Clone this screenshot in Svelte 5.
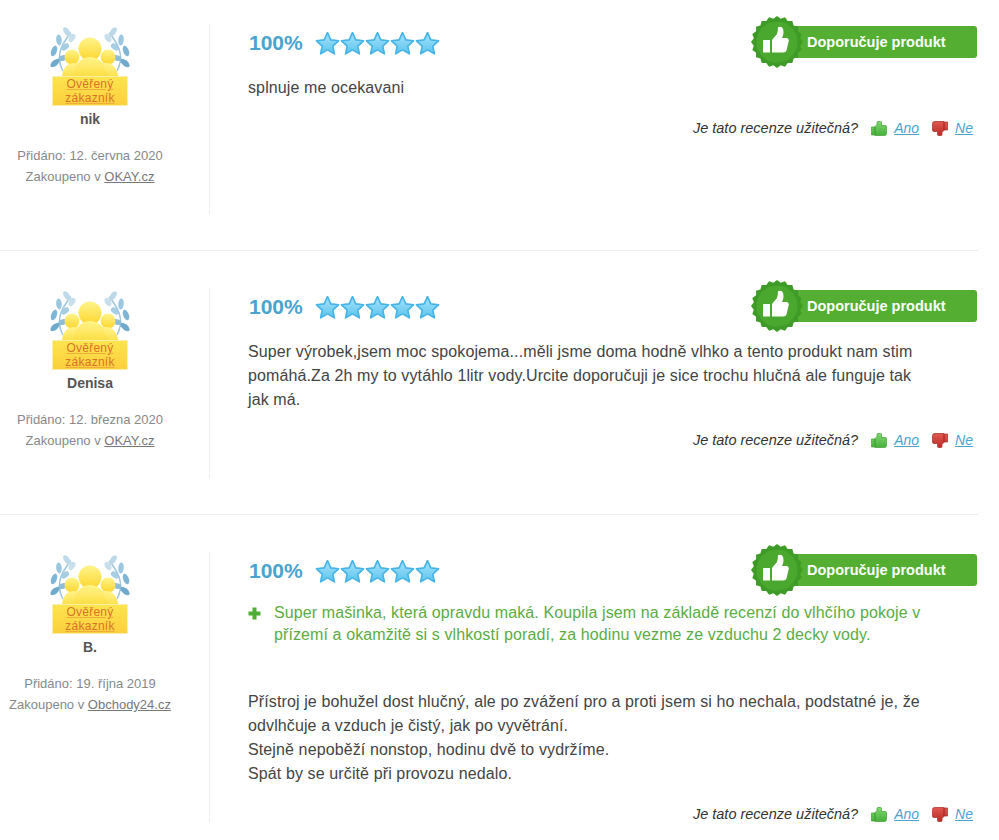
<script>
  const reviews = [
    {
      name: 'nik', date: '12. června 2020', shop: 'OKAY.cz',
      text: ['splnuje me ocekavani'],
    },
    {
      name: 'Denisa', date: '12. března 2020', shop: 'OKAY.cz',
      text: ['Super výrobek,jsem moc spokojema...měli jsme doma hodně vlhko a tento produkt nam stim pomáhá.Za 2h my to vytáhlo 1litr vody.Urcite doporučuji je sice trochu hlučná ale funguje tak jak má.'],
    },
    {
      name: 'B.', date: '19. října 2019', shop: 'Obchody24.cz',
      pro: 'Super mašinka, která opravdu maká. Koupila jsem na základě recenzí do vlhčího pokoje v přízemí a okamžitě si s vlhkostí poradí, za hodinu vezme ze vzduchu 2 decky vody.',
      text: [
        'Přístroj je bohužel dost hlučný, ale po zvážení pro a proti jsem si ho nechala, podstatné je, že odvlhčuje a vzduch je čistý, jak po vyvětrání.',
        'Stejně nepoběží nonstop, hodinu dvě to vydržíme.',
        'Spát by se určitě při provozu nedalo.',
      ],
    },
  ];

  const STAR = 'M12 1.6l3.2 6.9 7.4.9-5.500 5.100 1.500 7.400L12 18.100l-6.600 3.800 1.500-7.400L1.400 9.400l7.400-.9z';

  // laurel leaves: x, y, angle, length, fill
  const LEAVES = [
    [5, 36, 40, 11, '#6fa9cc'],
    [4, 24, 70, 11, '#7fb6d6'],
    [9, 13, 95, 11, '#9cc8df'],
    [17, 5, 125, 11, '#bcd9e8'],
    [13, 31, 15, 9, '#8dbdd8'],
    [15, 20, 35, 9, '#a6cde1'],
    [22, 11, 55, 9, '#c8dfeb'],
  ];

  // burst of 20 shallow teeth behind the thumb
  const burst = Array.from({ length: 40 }, (_, i) => {
    const a = (i * Math.PI) / 20;
    const r = i % 2 ? 23.5 : 26;
    return `${(26 + r * Math.sin(a)).toFixed(1)},${(26 - r * Math.cos(a)).toFixed(1)}`;
  }).join(' ');
</script>

<svg class="defs" width="0" height="0" aria-hidden="true">
  <defs>
    <linearGradient id="star-fill" x1="0" y1="0" x2="0" y2="1">
      <stop offset="0" stop-color="#a8e3fa" />
      <stop offset="1" stop-color="#5cc3ee" />
    </linearGradient>
    <linearGradient id="gold" x1="0" y1="0" x2="0" y2="1">
      <stop offset="0" stop-color="#fff48a" />
      <stop offset="1" stop-color="#fdd62e" />
    </linearGradient>
    <linearGradient id="up-fill" x1="0" y1="0" x2="0" y2="1">
      <stop offset="0" stop-color="#7fd86f" />
      <stop offset="1" stop-color="#46b03a" />
    </linearGradient>
    <linearGradient id="down-fill" x1="0" y1="0" x2="0" y2="1">
      <stop offset="0" stop-color="#e0584f" />
      <stop offset="1" stop-color="#b92c26" />
    </linearGradient>
  </defs>
</svg>

<div class="reviews">
  {#each reviews as r}
    <article class="review">
      <aside class="author">
        <div class="badge">
          <svg class="crest" width="80" height="60" viewBox="0 0 80 60">
            {#each ['', 'translate(80 0) scale(-1 1)'] as side}
              <g transform={side}>
                <path d="M13 44 Q3 26 21 6" fill="none" stroke="#9cc7de" stroke-width="1.500" />
                {#each LEAVES as [x, y, angle, len, fill]}
                  <ellipse cx={x} cy={y} rx={len / 2} ry="2.800" {fill} transform="rotate({-angle} {x} {y})" />
                {/each}
              </g>
            {/each}
            <circle cx="22" cy="30" r="7.500" fill="url(#gold)" />
            <circle cx="58" cy="30" r="7.500" fill="url(#gold)" />
            <path d="M11 56 Q12 36 24 36 H56 Q68 36 69 56z" fill="url(#gold)" />
            <circle cx="40" cy="22" r="11.500" fill="url(#gold)" />
            <path d="M22 56 Q24 30 40 30 Q56 30 58 56z" fill="url(#gold)" />
          </svg>
          <div class="ribbon">Ověřený<br />zákazník</div>
        </div>
        <strong class="name">{r.name}</strong>
        <p class="meta">Přidáno: {r.date}</p>
        <p class="meta">Zakoupeno v <span class="shop">{r.shop}</span></p>
      </aside>

      <div class="body">
        <header class="head">
          <span class="percent">100%</span>
          <span class="stars">
            {#each [0, 1, 2, 3, 4] as s (s)}
              <svg width="25" height="25" viewBox="0 0 24 24">
                <path d={STAR} fill="url(#star-fill)" stroke="#45b4e6" stroke-width="1.600" stroke-linejoin="round" />
              </svg>
            {/each}
          </span>
          <div class="recommend">
            <svg class="seal" width="52" height="52" viewBox="0 0 52 52">
              <polygon points={burst} fill="#3f9b27" />
              <circle cx="26" cy="26" r="20.500" fill="#4aa82f" />
              <path d="M12 24h7v12.500h-7z M21 24 L26 18 Q27 15 27 11 Q32.500 10 32.500 16 Q32.500 19.500 31 22 H36 Q38.500 23 37.500 26 L35.500 34.500 Q35 36.500 32 36.500 H21z" fill="#fff" />
            </svg>
            <span class="recommend-label">Doporučuje produkt</span>
          </div>
        </header>

        {#if r.pro}
          <div class="pro">
            <svg width="13" height="13" viewBox="0 0 13 13"><path d="M4.500 0.500h4v4h4v4h-4v4h-4v-4h-4v-4h4z" fill="#4fae33" /></svg>
            <p>{r.pro}</p>
          </div>
        {/if}

        <div class="text" class:after-pro={r.pro}>
          {#each r.text as line}
            <p>{line}</p>
          {/each}
        </div>

        <footer class="useful">
          <em>Je tato recenze užitečná?</em>
          <span class="vote">
            <svg width="16" height="15" viewBox="0 0 16 15"><path d="M0.500 6h3.500v8h-3.500z M4 5.500 L6 4 V1.500 Q6 0.500 7 0.500 H9.500 Q10.500 0.500 10.500 1.500 V4.500 H14.500 Q15.500 4.500 15.500 6 V12.500 Q15.500 14.500 13.500 14.500 H4z" fill="url(#up-fill)" stroke="#3f9f34" stroke-width="0.700" /></svg>
            <a href="#ano">Ano</a>
          </span>
          <span class="vote">
            <svg width="16" height="15" viewBox="0 0 16 15"><path d="M15.500 1v8h-3.500v-8z M12 0.500 H2.500 Q0.500 0.500 0.500 2.500 V9 Q0.500 10.500 2 10.500 H5.500 V13.500 Q5.500 14.500 6.500 14.500 H9 Q10 14.500 10 13.500 V11 L12 9.500z" fill="url(#down-fill)" stroke="#a82a25" stroke-width="0.700" /></svg>
            <a href="#ne">Ne</a>
          </span>
        </footer>
      </div>
    </article>
  {/each}
</div>

<style>
  :global(body) {
    background: #fff;
    font-family: 'Liberation Sans', Arial, sans-serif;
  }

  .defs { position: absolute; }

  .reviews { width: 978px; }

  .review {
    display: flex;
    align-items: flex-start;
    min-height: 190px;
    padding: 37px 0 36px;
    border-bottom: 1px solid #eeeeee;
  }
  .review:first-child { padding-top: 24px; }
  .review:last-child { border-bottom: none; padding-bottom: 0; }

  .author {
    flex: 0 0 180px;
    display: flex;
    flex-direction: column;
    align-items: center;
    align-self: stretch;
    position: relative;
    margin-right: 29px;
  }
  .author::after {
    content: '';
    position: absolute;
    top: 0;
    bottom: 0;
    right: -30px;
    width: 1px;
    background: #eeeeee;
  }

  .badge {
    width: 80px;
    height: 81px;
    position: relative;
    margin-top: 3px;
  }
  .crest { display: block; filter: blur(0.4px); }
  .ribbon {
    position: absolute;
    left: 3px;
    right: 3px;
    top: 50px;
    height: 28px;
    background: linear-gradient(#fde44e, #fbcf3e);
    box-shadow: 0 0 0 1px #fdeea8;
    color: #d9732b;
    font-size: 12px;
    letter-spacing: 0.25px;
    line-height: 14px;
    text-align: center;
    text-decoration: underline;
    text-decoration-color: #edae3c;
  }

  .name {
    font-size: 14px;
    line-height: 16px;
    color: #555555;
    margin: 3px 0 18px;
  }

  .meta {
    margin: 0;
    font-size: 13px;
    line-height: 21px;
    color: #888888;
  }
  .shop {
    text-decoration: underline;
    color: #777777;
  }

  .body {
    flex: 1;
    min-width: 0;
    padding-left: 39px;
  }

  .head {
    display: flex;
    align-items: center;
    height: 38px;
    position: relative;
  }
  .percent {
    font-size: 21px;
    font-weight: bold;
    line-height: 38px;
    color: #4ba3cf;
    margin-left: 1px;
    width: 66px;
  }
  .stars { display: flex; }
  .stars svg { display: block; }

  .recommend {
    position: absolute;
    right: 1px;
    top: -8px;
    width: 226px;
    height: 52px;
    display: flex;
    align-items: center;
  }
  .seal {
    position: relative;
    flex: none;
    z-index: 1;
  }
  .recommend::before {
    content: '';
    position: absolute;
    left: 40px;
    right: 0;
    top: 10px;
    height: 32px;
    background: #53ae32;
    border-radius: 3px;
  }
  .recommend-label {
    position: relative;
    margin-left: 4px;
    color: #fff;
    font-size: 14.500px;
    font-weight: bold;
  }

  .pro {
    display: flex;
    gap: 13px;
    margin-top: 12px;
    color: #5aad44;
  }
  .pro svg { flex: none; margin-top: 5px; }
  .pro p {
    margin: 0;
    width: 655px;
    font-size: 16px;
    letter-spacing: 0.1px;
    line-height: 22px;
  }

  .text {
    margin-top: 14px;
    width: 675px;
    font-size: 16px;
    letter-spacing: 0.115px;
    line-height: 24px;
    color: #444444;
  }
  .text.after-pro { margin-top: 44px; }
  .text p { margin: 0; }

  .useful {
    display: flex;
    justify-content: flex-end;
    align-items: center;
    gap: 13px;
    margin-top: 20px;
    padding-right: 5px;
    font-size: 14.500px;
    color: #333333;
  }
  .vote {
    display: flex;
    align-items: center;
    gap: 7px;
  }
  .vote a {
    color: #4ba3cf;
    font-style: italic;
    font-size: 14px;
  }
</style>
